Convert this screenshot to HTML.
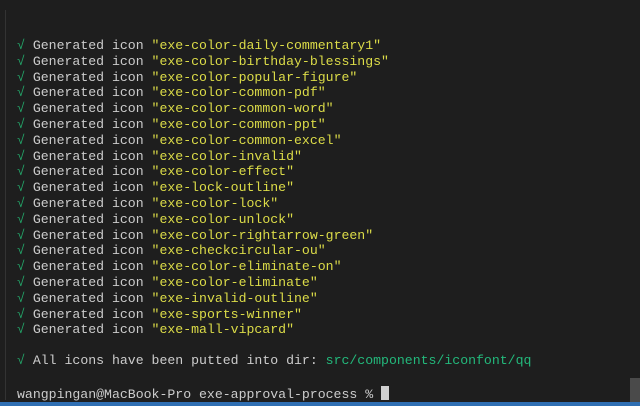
<!DOCTYPE html>
<html><head><meta charset="utf-8"><style>
html,body{margin:0;padding:0;}
body{width:640px;height:406px;background:#1e1e1e;position:relative;overflow:hidden;font-family:"Liberation Mono",monospace;font-size:13.2px;}
.l{position:absolute;left:17px;white-space:pre;color:#cccccc;line-height:16px;}
.g{color:#23a86a}.y{color:#dcdc48}.t{color:#23b87b}
.bar{position:absolute;left:5px;top:10px;width:1px;height:390px;background:#333;}
.sb{position:absolute;left:630px;top:378px;width:10px;height:24px;background:#4a4a4a;}
.bot{position:absolute;left:0;top:402px;width:640px;height:4px;background:#2f6fb3;}
.cur{display:inline-block;width:8px;height:14px;background:#d0d0d0;vertical-align:-2px;}
</style></head><body>
<div class="bar"></div>
<div class="l" style="top:38px"><span class="g">√</span> Generated icon <span class="y">"exe-color-daily-commentary1"</span></div>
<div class="l" style="top:54px"><span class="g">√</span> Generated icon <span class="y">"exe-color-birthday-blessings"</span></div>
<div class="l" style="top:70px"><span class="g">√</span> Generated icon <span class="y">"exe-color-popular-figure"</span></div>
<div class="l" style="top:85px"><span class="g">√</span> Generated icon <span class="y">"exe-color-common-pdf"</span></div>
<div class="l" style="top:101px"><span class="g">√</span> Generated icon <span class="y">"exe-color-common-word"</span></div>
<div class="l" style="top:117px"><span class="g">√</span> Generated icon <span class="y">"exe-color-common-ppt"</span></div>
<div class="l" style="top:133px"><span class="g">√</span> Generated icon <span class="y">"exe-color-common-excel"</span></div>
<div class="l" style="top:149px"><span class="g">√</span> Generated icon <span class="y">"exe-color-invalid"</span></div>
<div class="l" style="top:164px"><span class="g">√</span> Generated icon <span class="y">"exe-color-effect"</span></div>
<div class="l" style="top:180px"><span class="g">√</span> Generated icon <span class="y">"exe-lock-outline"</span></div>
<div class="l" style="top:196px"><span class="g">√</span> Generated icon <span class="y">"exe-color-lock"</span></div>
<div class="l" style="top:212px"><span class="g">√</span> Generated icon <span class="y">"exe-color-unlock"</span></div>
<div class="l" style="top:228px"><span class="g">√</span> Generated icon <span class="y">"exe-color-rightarrow-green"</span></div>
<div class="l" style="top:243px"><span class="g">√</span> Generated icon <span class="y">"exe-checkcircular-ou"</span></div>
<div class="l" style="top:259px"><span class="g">√</span> Generated icon <span class="y">"exe-color-eliminate-on"</span></div>
<div class="l" style="top:275px"><span class="g">√</span> Generated icon <span class="y">"exe-color-eliminate"</span></div>
<div class="l" style="top:291px"><span class="g">√</span> Generated icon <span class="y">"exe-invalid-outline"</span></div>
<div class="l" style="top:307px"><span class="g">√</span> Generated icon <span class="y">"exe-sports-winner"</span></div>
<div class="l" style="top:322px"><span class="g">√</span> Generated icon <span class="y">"exe-mall-vipcard"</span></div>
<div class="l" style="top:353px"><span class="g">√</span> All icons have been putted into dir: <span class="t">src/components/iconfont/qq</span></div>
<div class="l" style="top:386px">wangpingan@MacBook-Pro exe-approval-process % <span class="cur"></span></div>
<div class="sb"></div>
<div class="bot"></div>
</body></html>
